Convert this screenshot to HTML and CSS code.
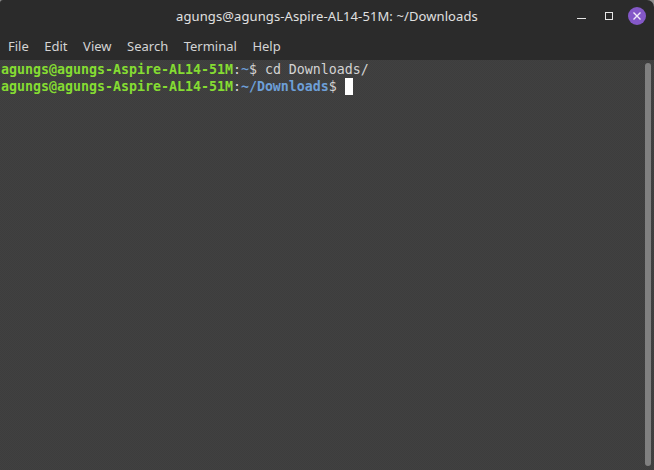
FILE: index.html
```html
<!DOCTYPE html>
<html lang="en">
<head>
<meta charset="utf-8">
<title>Terminal</title>
<link rel="stylesheet" href="styles.css">
</head>
<body>
<div class="window">
  <header class="titlebar">
    <div class="title">agungs@agungs-Aspire-AL14-51M: ~/Downloads</div>
    <div class="controls">
      <svg class="ctl ctl-min" width="9" height="18" viewBox="0 0 9 18"><rect x="0" y="11" width="9" height="1" fill="#e6e6e6"/></svg>
      <svg class="ctl" width="8" height="18" viewBox="0 0 8 18"><rect x="0.5" y="5.5" width="7" height="7" fill="none" stroke="#e6e6e6"/></svg>
      <svg class="ctl" width="18" height="18" viewBox="0 0 18 18"><circle cx="9" cy="9" r="9" fill="#8458c8"/><path d="M5.5 5.5l7 7M12.5 5.5l-7 7" stroke="#f2ecfa" stroke-width="1.4"/></svg>
    </div>
  </header>
  <nav class="menubar">
    <span class="menu">File</span>
    <span class="menu">Edit</span>
    <span class="menu">View</span>
    <span class="menu">Search</span>
    <span class="menu">Terminal</span>
    <span class="menu">Help</span>
  </nav>
  <main class="terminal">
    <div class="output">
      <div class="line"><span class="user">agungs@agungs-Aspire-AL14-51M</span>:<span class="home">~</span>$ cd Downloads/</div>
      <div class="line"><span class="user">agungs@agungs-Aspire-AL14-51M</span>:<span class="path">~/Downloads</span>$ <span class="cursor"></span></div>
    </div>
    <div class="scrollbar"><div class="thumb"></div></div>
  </main>
</div>
</body>
</html>
```
FILE: styles.css
```css
* { box-sizing: border-box; }
html, body { margin: 0; height: 100%; background: #8f8f8f; }
.window {
  width: 654px;
  height: 470px;
  display: flex;
  flex-direction: column;
  background: #2b2b2b;
  border-radius: 3px 7px 0 0;
  overflow: hidden;
}
.titlebar {
  height: 33px;
  flex: none;
  display: flex;
  align-items: center;
  justify-content: center;
  position: relative;
}
.title {
  font: 13px "Noto Sans", sans-serif;
  letter-spacing: 0.1px;
  color: #e0e0e0;
  position: relative;
  top: -1px;
}
.controls {
  position: absolute;
  right: 8px;
  top: 7px;
  display: flex;
  align-items: center;
  gap: 15px;
}
.ctl-min { margin-right: 4px; }
.menubar {
  height: 27px;
  flex: none;
  display: flex;
  align-items: center;
  padding: 0 0 2px 8px;
  gap: 15.5px;
  font: 13px "Noto Sans", sans-serif;
  color: #d4d4d4;
}
.terminal {
  flex: 1;
  display: flex;
  background: repeating-conic-gradient(#414141 0 25%, #3d3d3d 0 50%) 0 0 / 2px 2px;
  font: 13.29px/17px "DejaVu Sans Mono", monospace;
  color: #d3d3d3;
}
.output { flex: 1; padding: 1px 0 0 1px; }
.line { height: 17px; white-space: pre; }
.user { color: #85dc32; font-weight: 700; }
.home, .path { color: #6d9fd8; font-weight: 700; }
.home { font-weight: 400; }
.cursor { display: inline-block; width: 8px; height: 17px; background: #fff; vertical-align: -4px; }
.scrollbar { width: 12px; flex: none; padding: 3px 3px 4px; }
.thumb { height: 100%; width: 6px; border-radius: 3px; background: #808080; }
```
